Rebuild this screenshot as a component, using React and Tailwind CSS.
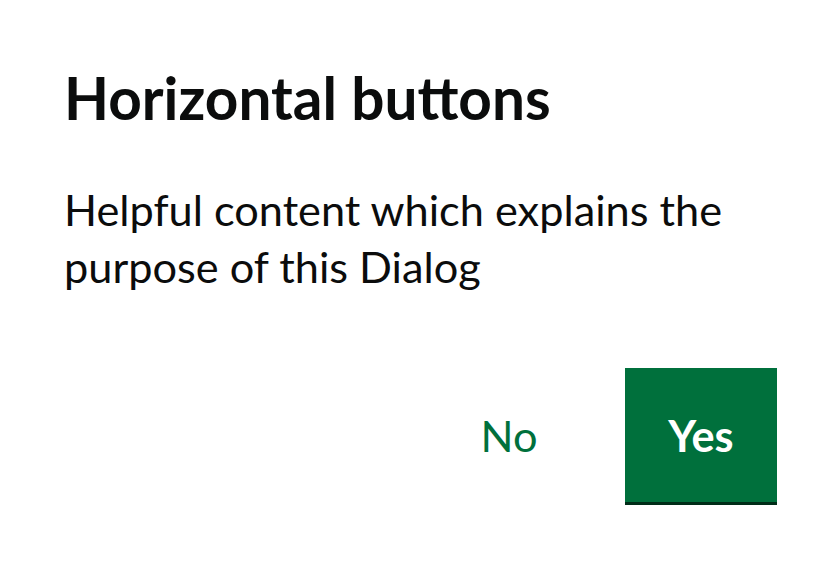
import React from "react";

export default function App() {
  return (
    <div className="w-[840px] h-[566px] bg-white text-[#0b0c0c] px-16 pt-[67px]" style={{ fontFamily: "Lato, 'Liberation Sans', sans-serif" }}>
      <h2 className="font-bold text-[58.5px] leading-[60px]">Horizontal buttons</h2>
      <p className="mt-[54px] text-[43.3px] leading-[57px] w-[680px]">
        Helpful content which explains the purpose of this Dialog
      </p>
      <div className="mt-[73px] -mr-px flex justify-end gap-10">
        <button className="w-[152px] h-[134px] text-[43.3px] text-[#00703c]">No</button>
        <button className="w-[152px] h-[134px] bg-[#00703c] text-white font-bold text-[43.3px] shadow-[0_3px_0_#002d18]">
          Yes
        </button>
      </div>
    </div>
  );
}
